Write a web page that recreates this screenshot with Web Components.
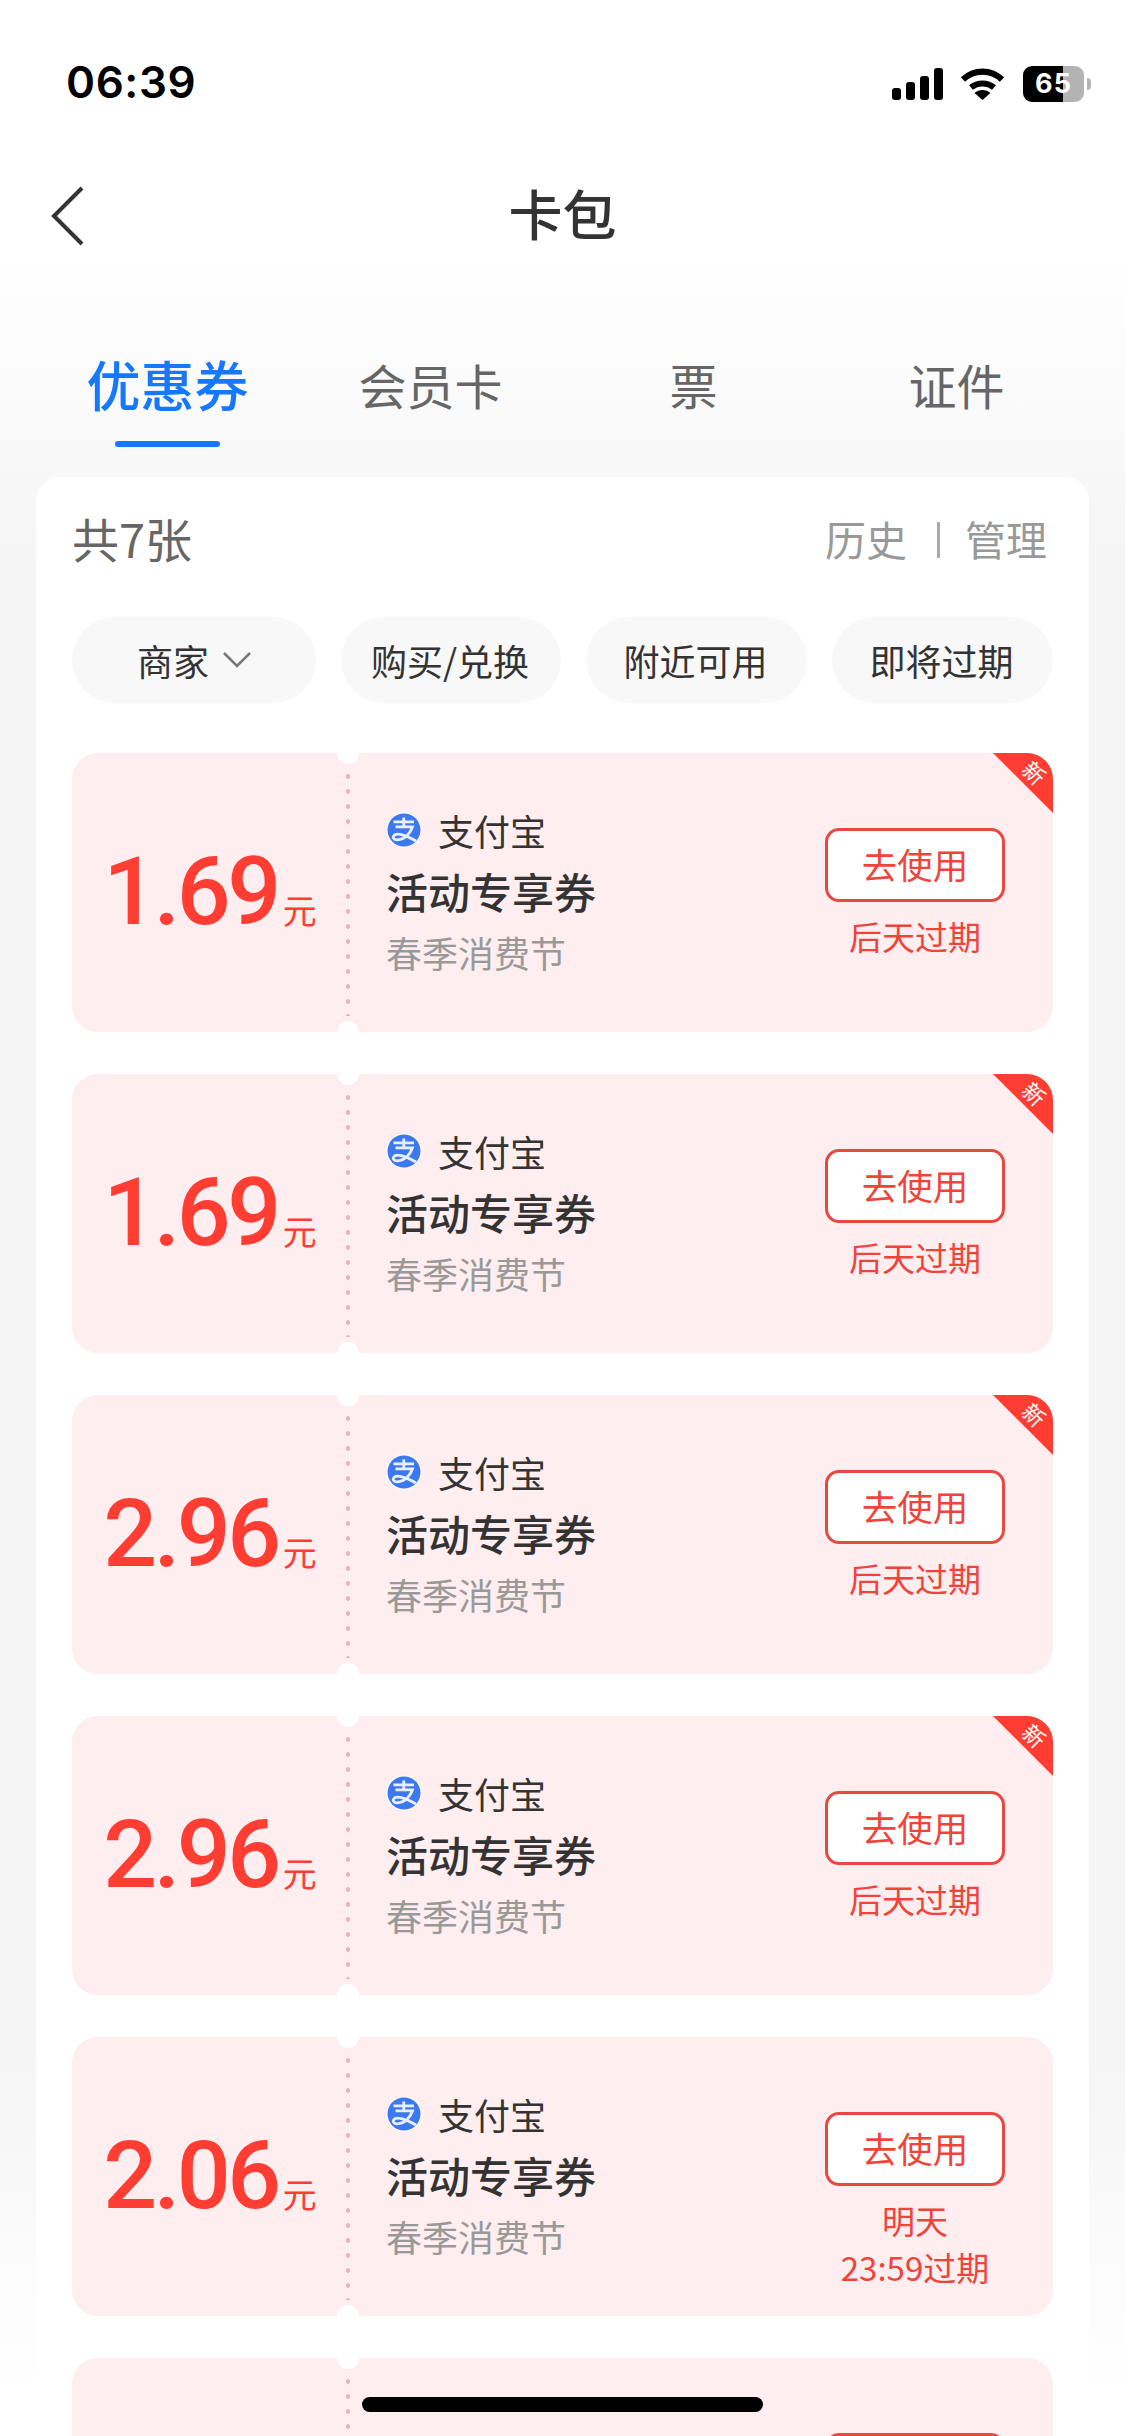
<!DOCTYPE html>
<html lang="zh-CN">
<head>
<meta charset="utf-8">
<title>卡包</title>
<style>
html,body{margin:0;padding:0;background:#fff}
body{font-family:"Noto Sans CJK SC","Noto Sans",sans-serif}
</style>
</head>
<body>
<template id="t-app">
<style>
:host{display:flex;flex-direction:column;width:1125px;height:2436px;overflow:hidden;position:relative;
background:linear-gradient(180deg,#fff 0,#fff 250px,#f5f5f5 560px,#f5f5f5 2050px,#fff 2400px)}
::slotted(*){flex:none}
.home{position:absolute;left:362px;top:2397px;width:401px;height:15px;border-radius:8px;background:#000}
</style>
<slot></slot><div class="home"></div>
</template>

<template id="t-status">
<style>
:host{display:flex;box-sizing:border-box;height:160px;padding:60px 34px 0 66px;justify-content:space-between;align-items:flex-start}
.time{font:600 44px/44px Inter,"Liberation Sans",sans-serif;color:#000;letter-spacing:.6px}
.icons{display:flex;align-items:center;height:44px;margin-top:2px}
svg{display:block}
.wifi{margin-left:17px}
.bat{margin-left:18px;width:61px;height:36px;border-radius:9px;overflow:hidden;
background:linear-gradient(90deg,#000 0,#000 40px,#b3b3b3 40px);color:#fff;
font:700 27px/36px Inter,"Liberation Sans",sans-serif;text-align:center;letter-spacing:1px}
.nub{margin-left:3px;width:4px;height:12px;border-radius:0 6px 6px 0;background:#b3b3b3}
</style>
<div class="time"><slot name="time"></slot></div>
<div class="icons">
<svg width="51" height="32" viewBox="0 0 51 32"><rect x="0" y="20" width="9" height="12" rx="3"/><rect x="14" y="14" width="9" height="18" rx="3"/><rect x="28" y="8" width="9" height="24" rx="3"/><rect x="42" y="0" width="9" height="32" rx="3"/></svg>
<svg class="wifi" width="45" height="32" viewBox="0 0 45 32"><path d="M3 11.500C14 1 31 1 42 11.500" fill="none" stroke="#000" stroke-width="6.200"/><path d="M11 19.500C17.500 14 27.500 14 34 19.500" fill="none" stroke="#000" stroke-width="6"/><path d="M22.500 32L14.500 25C19 21 26 21 30.500 25Z"/></svg>
<div class="bat"><slot name="battery"></slot></div>
<div class="nub"></div>
</div>
</template>

<template id="t-nav">
<style>
:host{display:block;position:relative;box-sizing:border-box;height:112px;text-align:center;
font:500 54px/106px "Noto Sans CJK SC",sans-serif;color:#333}
svg{position:absolute;left:50px;top:26px}
</style>
<svg width="36" height="60" viewBox="0 0 36 60"><path d="M32 2L4 30L32 58" fill="none" stroke="#333" stroke-width="4"/></svg>
<slot></slot>
</template>

<template id="t-tabs">
<style>
:host{display:grid;grid-template-columns:repeat(4,263px);box-sizing:border-box;height:205px;padding:77px 36px 0}
</style>
<slot></slot>
</template>

<template id="t-tab">
<style>
:host{display:flex;flex-direction:column;align-items:center;font:400 48px/70px "Noto Sans CJK SC",sans-serif;color:#666}
:host([active]){font-size:54px;font-weight:500;color:#1677ff}
.bar{display:none;width:105px;height:6px;margin-top:22px;border-radius:3px;background:#1677ff}
:host([active]) .bar{display:block}
</style>
<slot></slot><div class="bar"></div>
</template>

<template id="t-panel">
<style>
:host{display:block;box-sizing:border-box;margin:0 36px;padding:0 36px;background:#fff;border-radius:24px 24px 0 0;flex:1 0 auto}
.head{display:flex;justify-content:space-between;align-items:center;height:140px;padding-bottom:14px;box-sizing:border-box}
.count{font:400 47px/60px "Noto Sans CJK SC",sans-serif;color:#666;padding-bottom:5px}
.links{display:flex;align-items:center;font:400 41px/60px "Noto Sans CJK SC",sans-serif;color:#999;margin-right:6px}
.lk{padding-bottom:5px}
.sep{width:3px;height:36px;background:#aaa;margin:0 25px 0 30px}
.chips{display:grid;grid-template-columns:244px 220px 221px 221px;gap:25px;margin-bottom:50px}
.list{display:flex;flex-direction:column;gap:42px}
</style>
<div class="head">
<div class="count"><slot name="count"></slot></div>
<div class="links"><span class="lk"><slot name="history"></slot></span><span class="sep"></span><span class="lk"><slot name="manage"></slot></span></div>
</div>
<div class="chips"><slot name="chip"></slot></div>
<div class="list"><slot></slot></div>
</template>

<template id="t-chip">
<style>
:host{display:flex;align-items:center;justify-content:center;box-sizing:border-box;height:86px;padding-right:2px;border-radius:43px;background:#f8f8f8;
font:400 36px/50px "Noto Sans CJK SC",sans-serif;color:#333}
:host([menu]){padding:0 2px 0 3px}
svg{display:none;margin-left:13px}
:host([menu]) svg{display:block}
</style>
<slot></slot>
<svg width="30" height="18" viewBox="0 0 30 18"><path d="M2 2L15 15L28 2" fill="none" stroke="#777" stroke-width="2.500"/></svg>
</template>

<template id="t-coupon">
<style>
:host{display:flex;position:relative;flex:none;height:279px;border-radius:26px;background:#feeef0;overflow:hidden}
.notch{position:absolute;left:265px;width:22px;height:22px;border-radius:50%;background:#fff}
.notch.t{top:-11px}.notch.b{bottom:-11px}
.dots{position:absolute;left:274px;top:16px;bottom:16px;width:4px;
background:radial-gradient(circle at 2px 7.500px,#ebb5bc 2px,transparent 2.600px) 0 0/4px 15px repeat-y}
.stub{flex:none;width:276px;height:100%;display:flex;justify-content:center;align-items:flex-start;box-sizing:border-box;padding-top:79px;color:#ff3d33}
.price{font:500 95px/120px Roboto,sans-serif;letter-spacing:-3.500px}
.unit{font:400 34px/40px "Noto Sans CJK SC",sans-serif;margin:58px 0 0 5px}
.info{flex:1;box-sizing:border-box;padding:57px 0 0 38px;min-width:0}
.merchant{display:flex;align-items:center;height:40px;font:400 36px/40px "Noto Sans CJK SC",sans-serif;color:#333}
.merchant svg{margin-right:16px;flex:none}
.title{margin-top:16px;font:500 42px/50px "Noto Sans CJK SC",sans-serif;color:#333}
.sub{margin-top:16px;font:400 36px/40px "Noto Sans CJK SC",sans-serif;color:#999}
:host([blank]) .merchant,:host([blank]) .title,:host([blank]) .sub{display:none}
.action{flex:none;width:180px;margin-right:48px;box-sizing:border-box;padding-top:75px;text-align:center}
.btn{box-sizing:border-box;height:74px;border:3px solid #e8483f;border-radius:14px;background:#fff;color:#f0443a;
font:400 35.500px/66px "Noto Sans CJK SC",sans-serif}
.exp{margin:0 -20px;padding-top:11px;font:400 33px/47px "Noto Sans CJK SC",Roboto,sans-serif;color:#f0443a}
.tri{display:none;position:absolute;right:0;top:0;width:60px;height:60px;background:#ff3d33;clip-path:polygon(0 0,100% 0,100% 100%)}
.badge{display:none;position:absolute;right:6px;top:7px;width:24px;text-align:center;transform:rotate(45deg);font:400 22px/24px "Noto Sans CJK SC",sans-serif;color:#fff}
:host([fresh]) .tri,:host([fresh]) .badge{display:block}
</style>
<div class="stub"><span class="price"><slot name="price"></slot></span><span class="unit"><slot name="unit"></slot></span></div>
<div class="info">
<div class="merchant">
<svg width="36" height="36" viewBox="0 0 36 36"><circle cx="18" cy="18" r="17.500" fill="#fff"/><circle cx="18" cy="18" r="16.500" fill="#3d78ee"/><path d="M17.800 5.500V14M7.500 9.800H28M9.500 14.800H26.500C24.500 21 19 27.500 11.500 27.800C7.500 28 6 25 8.500 23C12 20.500 19.500 23 30 29" fill="none" stroke="#e8effe" stroke-width="2.800"/></svg>
<slot name="merchant"></slot>
</div>
<div class="title"><slot name="title"></slot></div>
<div class="sub"><slot name="sub"></slot></div>
</div>
<div class="action">
<div class="btn"><slot name="button"></slot></div>
<div class="exp"><slot name="expiry"></slot></div>
</div>
<div class="dots"></div><div class="notch t"></div><div class="notch b"></div>
<div class="tri"></div><div class="badge"><slot name="badge"></slot></div>
</template>

<wallet-app>
  <status-bar><span slot="time">06:39</span><span slot="battery">65</span></status-bar>
  <nav-bar>卡包</nav-bar>
  <tab-strip>
    <tab-item active>优惠券</tab-item><tab-item>会员卡</tab-item><tab-item>票</tab-item><tab-item>证件</tab-item>
  </tab-strip>
  <coupon-panel>
    <span slot="count">共7张</span>
    <span slot="history">历史</span>
    <span slot="manage">管理</span>
    <filter-chip slot="chip" menu>商家</filter-chip>
    <filter-chip slot="chip">购买/兑换</filter-chip>
    <filter-chip slot="chip">附近可用</filter-chip>
    <filter-chip slot="chip">即将过期</filter-chip>

    <coupon-card fresh><span slot="price">1.69</span><span slot="unit">元</span><span slot="merchant">支付宝</span><span slot="title">活动专享券</span><span slot="sub">春季消费节</span><span slot="button">去使用</span><span slot="expiry">后天过期</span><span slot="badge">新</span></coupon-card>
    <coupon-card fresh><span slot="price">1.69</span><span slot="unit">元</span><span slot="merchant">支付宝</span><span slot="title">活动专享券</span><span slot="sub">春季消费节</span><span slot="button">去使用</span><span slot="expiry">后天过期</span><span slot="badge">新</span></coupon-card>
    <coupon-card fresh><span slot="price">2.96</span><span slot="unit">元</span><span slot="merchant">支付宝</span><span slot="title">活动专享券</span><span slot="sub">春季消费节</span><span slot="button">去使用</span><span slot="expiry">后天过期</span><span slot="badge">新</span></coupon-card>
    <coupon-card fresh><span slot="price">2.96</span><span slot="unit">元</span><span slot="merchant">支付宝</span><span slot="title">活动专享券</span><span slot="sub">春季消费节</span><span slot="button">去使用</span><span slot="expiry">后天过期</span><span slot="badge">新</span></coupon-card>
    <coupon-card><span slot="price">2.06</span><span slot="unit">元</span><span slot="merchant">支付宝</span><span slot="title">活动专享券</span><span slot="sub">春季消费节</span><span slot="button">去使用</span><span slot="expiry">明天<br>23:59过期</span></coupon-card>
    <coupon-card blank></coupon-card>
  </coupon-panel>
</wallet-app>
<script>
const defs={'wallet-app':'t-app','status-bar':'t-status','nav-bar':'t-nav','tab-strip':'t-tabs','tab-item':'t-tab','coupon-panel':'t-panel','filter-chip':'t-chip','coupon-card':'t-coupon'};
for(const [name,id] of Object.entries(defs)){
  customElements.define(name,class extends HTMLElement{
    constructor(){super();this.attachShadow({mode:'open'}).appendChild(document.getElementById(id).content.cloneNode(true));}
  });
}
</script>
</body>
</html>
